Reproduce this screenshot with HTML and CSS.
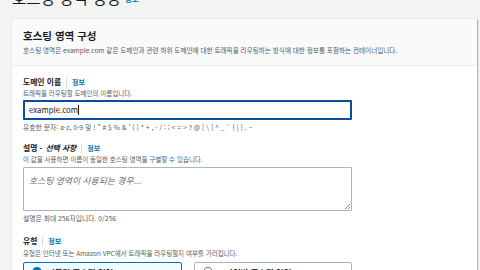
FILE: index.html
```html
<!DOCTYPE html>
<html lang="ko">
<head>
    <meta charset="UTF-8">
    <meta name="viewport" content="width=device-width, initial-scale=1.0">
    <title>호스팅 영역 생성</title>
    <link rel="stylesheet" href="styles.css">
</head>
<body>
  <div class="page">
    <h1 class="page-title">호스팅 영역 생성 <a href="#" class="info">정보</a></h1>

    <div class="panel">
      <div class="panel-header">
        <h2>호스팅 영역 구성</h2>
        <p class="desc">호스팅 영역은 example.com 같은 도메인과 관련 하위 도메인에 대한 트래픽을 라우팅하는 방식에 대한 정보를 포함하는 컨테이너입니다.</p>
      </div>

      <div class="panel-body">
        <div class="field">
          <div class="label">도메인 이름 <span class="sep"></span><a href="#" class="info">정보</a></div>
          <div class="hint">트래픽을 라우팅할 도메인의 이름입니다.</div>
          <div class="input focused">example.com<span class="caret"></span></div>
          <div class="constraint">유효한 문자: a-z, 0-9 및 ! " # $ % &amp; ' ( ) * + , - / : ; &lt; = &gt; ? @ [ \ ] ^ _ ` { | } . ~</div>
        </div>

        <div class="field">
          <div class="label">설명 - <i>선택 사항</i> <span class="sep"></span><a href="#" class="info">정보</a></div>
          <div class="hint">이 값을 사용하면 이름이 동일한 호스팅 영역을 구별할 수 있습니다.</div>
          <div class="textarea"><span class="placeholder">호스팅 영역이 사용되는 경우...</span><span class="grip"></span></div>
          <div class="constraint">설명은 최대 256자입니다. 0/256</div>
        </div>

        <div class="field type">
          <div class="label">유형 <span class="sep"></span><a href="#" class="info">정보</a></div>
          <div class="hint">유형은 인터넷 또는 Amazon VPC에서 트래픽을 라우팅할지 여부를 가리킵니다.</div>
          <div class="cards">
            <div class="card selected"><span class="radio on"></span><b>퍼블릭 호스팅 영역</b></div>
            <div class="card"><span class="radio"></span><b>프라이빗 호스팅 영역</b></div>
          </div>
        </div>
      </div>
    </div>
  </div>
</body>
</html>
```

FILE: styles.css
```css
body {
    margin: 0;
    background-color: #f2f3f3;
    font-family: "Noto Sans CJK KR", "Noto Sans", sans-serif;
    color: #16191f;
    overflow: hidden;
}
.page {
    padding: 0 3px 0 12px;
}
.page-title {
    font-size: 15.5px;
    font-weight: 400;
    line-height: 20px;
    margin: -13px 0 0 0;
    height: 32px;
    white-space: nowrap;
}
.page-title .info {
    font-size: 7.5px;
    vertical-align: 2px;
}
a.info {
    color: #0073bb;
    font-weight: 700;
    text-decoration: none;
    font-size: 7px;
}
.panel {
    background: #fff;
    box-shadow: 1px 1px 1px 0 rgba(0, 28, 36, 0.25), 0 0 1px 0 rgba(0, 28, 36, 0.2);
    height: 260px;
}
.panel-header {
    background: #fafafa;
    border-bottom: 1px solid #eaeded;
    padding: 9px 11px 0;
    height: 37px;
}
.panel-header h2 {
    font-size: 10.5px;
    font-weight: 700;
    margin: 0;
    line-height: 15px;
}
.desc {
    margin: 2px 0 0;
    font-size: 6.6px;
    line-height: 10px;
    color: #545b64;
}
.panel-body {
    padding: 10px 11px;
    display: flex;
    flex-direction: column;
    gap: 10px;
}
.field {
    width: 329px;
}
.field.type {
    margin-top: 2px;
}
.label {
    font-size: 7.8px;
    font-weight: 700;
    line-height: 12px;
    display: flex;
    align-items: center;
    gap: 5px;
    white-space: nowrap;
}
.label i {
    margin-left: -2px;
}
.sep {
    width: 1px;
    height: 9px;
    background: #d5dbdb;
}
.hint {
    font-size: 6.5px;
    line-height: 10px;
    color: #545b64;
    white-space: nowrap;
}
.field.type .hint {
    margin-top: 1px;
}
.constraint {
    font-size: 6.8px;
    line-height: 10px;
    color: #545b64;
    margin-top: 2px;
    white-space: nowrap;
}
.input {
    box-sizing: border-box;
    height: 20px;
    margin-top: 2px;
    border: 1px solid #aab7b8;
    border-radius: 1px;
    padding: 0 5px;
    font-size: 7.8px;
    line-height: 18px;
    display: flex;
    align-items: center;
}
.input.focused {
    border: 2px solid #0a4f95;
    padding-left: 4px;
}
.caret {
    width: 1px;
    height: 10px;
    background: #16191f;
}
.textarea {
    position: relative;
    box-sizing: border-box;
    height: 44px;
    margin-top: 3px;
    border: 1px solid #aab7b8;
    border-radius: 1px;
    padding: 2px 5px;
    line-height: 14px;
}
.placeholder {
    font-size: 8.8px;
    font-style: italic;
    color: #687078;
}
.grip {
    position: absolute;
    right: 1px;
    bottom: 1px;
    width: 5px;
    height: 5px;
    background: linear-gradient(135deg, transparent 45%, #888 45%, #888 55%, transparent 55%, transparent 75%, #888 75%, #888 85%, transparent 85%);
}
.cards {
    display: flex;
    gap: 12px;
    margin-top: 4px;
}
.card {
    flex: 1;
    box-sizing: border-box;
    height: 28px;
    border: 1px solid #aab7b8;
    border-radius: 2px;
    padding: 3px 8px;
    display: flex;
    align-items: flex-start;
    gap: 5px;
    font-size: 8.4px;
    line-height: 12px;
}
.card.selected {
    border-color: #0073bb;
    background: #f1faff;
}
.radio {
    box-sizing: border-box;
    width: 10px;
    height: 10px;
    border-radius: 50%;
    border: 1px solid #687078;
    background: #fff;
    margin-top: 1px;
}
.radio.on {
    border: 3px solid #0073bb;
}
```
